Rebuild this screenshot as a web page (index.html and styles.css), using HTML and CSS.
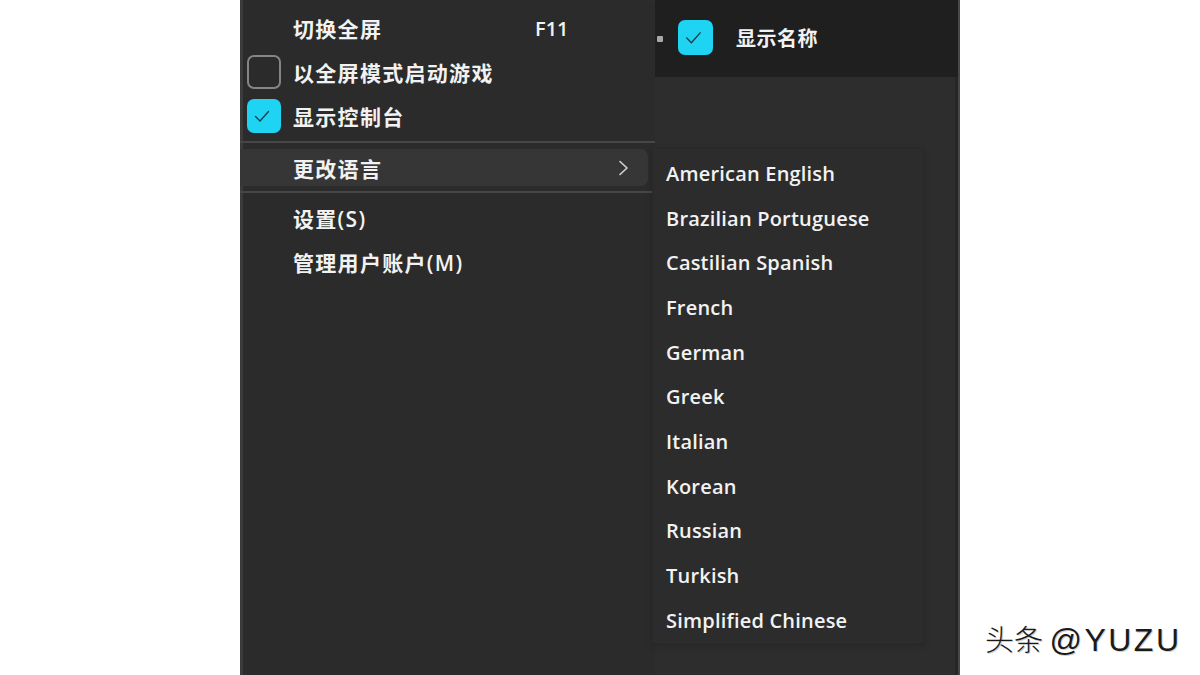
FILE: index.html
```html
<!DOCTYPE html>
<html lang="zh-CN">
<head>
  <meta charset="UTF-8" />
  <title>yuzu - 菜单</title>
  <link rel="stylesheet" href="styles.css">
</head>
<body>
  <div class="gutter"></div>

  <div class="screen">
    <div class="menu">
      <div class="item">
        <span class="box-slot"></span>
        <span class="label">切换全屏</span>
        <span class="shortcut">F11</span>
      </div>
      <div class="item">
        <span class="box-slot"><span class="check"></span></span>
        <span class="label">以全屏模式启动游戏</span>
      </div>
      <div class="item">
        <span class="box-slot">
          <span class="check on">
            <svg width="34" height="34" viewBox="0 0 34 34"><path d="M8.5 17.5 L13 22 L21.5 12.5" fill="none" stroke="#17404c" stroke-width="1.4" stroke-linecap="round" stroke-linejoin="round"/></svg>
          </span>
        </span>
        <span class="label">显示控制台</span>
      </div>
      <div class="sep"></div>
      <div class="item sub active">
        <span class="box-slot"></span>
        <span class="label">更改语言</span>
        <svg class="chevron" width="14" height="16" viewBox="0 0 14 16"><path d="M4 1.5 L11 8 L4 14.5" fill="none" stroke="#d4d4d4" stroke-width="1.6" stroke-linecap="round" stroke-linejoin="round"/></svg>
      </div>
      <div class="sep"></div>
      <div class="item">
        <span class="box-slot"></span>
        <span class="label">设置(S)</span>
      </div>
      <div class="item">
        <span class="box-slot"></span>
        <span class="label">管理用户账户(M)</span>
      </div>
    </div>

    <div class="right">
      <div class="topbar">
        <span class="dot"></span>
        <span class="check on">
          <svg width="35" height="35" viewBox="0 0 34 34"><path d="M8.5 17.5 L13 22 L21.5 12.5" fill="none" stroke="#17404c" stroke-width="1.4" stroke-linecap="round" stroke-linejoin="round"/></svg>
        </span>
        <span class="toplabel">显示名称</span>
      </div>

      <div class="submenu">
        <div class="lang">American English</div>
        <div class="lang">Brazilian Portuguese</div>
        <div class="lang">Castilian Spanish</div>
        <div class="lang">French</div>
        <div class="lang">German</div>
        <div class="lang">Greek</div>
        <div class="lang">Italian</div>
        <div class="lang">Korean</div>
        <div class="lang">Russian</div>
        <div class="lang">Turkish</div>
        <div class="lang">Simplified Chinese</div>
      </div>
    </div>
  </div>

  <div class="side">
    <span class="watermark">头条 <span class="handle">@YUZU</span></span>
  </div>
</body>
</html>
```

FILE: styles.css
```css
body {
  margin: 0;
  height: 675px;
  background: #fff;
  display: flex;
  overflow: hidden;
  font-family: "Open Sans", "Noto Sans CJK SC", sans-serif;
}

.gutter {
  width: 240px;
  flex: none;
}

.screen {
  width: 720px;
  flex: none;
  display: flex;
  background: #2d2d2d;
  box-shadow: inset -2px 0 #474747, inset -5px 0 #262626;
}

/* main context menu */
.menu {
  width: 412px;
  flex: none;
  background: #2b2b2b;
  border-left: 3px solid #3b3b3b;
  border-top-right-radius: 9px;
  padding-top: 6px;
  box-sizing: content-box;
  color: #f2f2f2;
}

.item {
  height: 44px;
  display: flex;
  align-items: center;
  padding-left: 4px;
  font-size: 21px;
  font-weight: 600;
  letter-spacing: 1.3px;
}

.box-slot {
  width: 34px;
  height: 34px;
  flex: none;
  margin-right: 12px;
}

.label {
  width: 242px;
  flex: none;
  white-space: nowrap;
}

.shortcut {
  font-size: 20px;
  letter-spacing: 0;
}

.check {
  display: block;
  width: 34px;
  height: 34px;
  box-sizing: border-box;
  border: 2px solid #858585;
  border-radius: 7px;
  background: #2b2b2b;
}

.check.on {
  border: none;
  background: #1fd3f3;
}

.check svg {
  display: block;
}

.sep {
  height: 2px;
  margin: 3px 0 0 -3px;
  background: #464646;
}

.item.sub {
  height: 37px;
  margin: 6px 7px 5px -3px;
  padding-left: 7px;
}

.item.active {
  background: #363636;
  border-radius: 0 7px 7px 0;
}

.item.sub + .sep {
  margin-top: 0;
  margin-bottom: 3px;
}

.chevron {
  margin-left: 81px;
}

/* right side */
.right {
  flex: 1;
  display: flex;
  flex-direction: column;
}

.topbar {
  height: 77px;
  background: #1f1f1f;
  display: flex;
  align-items: center;
  margin-right: 2px;
}

.dot {
  width: 6px;
  height: 6px;
  border-radius: 1px;
  background: #a8a8a8;
  margin: 0 15px 0 2px;
}

.topbar .check {
  width: 35px;
  height: 35px;
  margin-top: -2px;
}

.toplabel {
  margin-left: 23px;
  color: #f2f2f2;
  font-size: 20px;
  font-weight: 600;
  letter-spacing: 0.5px;
  margin-top: -2px;
}

.submenu {
  width: 270px;
  margin: 71px 0 0 -3px;
  padding-top: 2px;
  background: #2c2c2c;
  border: 1px solid #292929;
  box-shadow: 0 2px 6px rgba(0, 0, 0, 0.15);
}

.lang {
  height: 44.7px;
  display: flex;
  align-items: center;
  padding-left: 13px;
  color: #f2f2f2;
  font-size: 20px;
  font-weight: 600;
  letter-spacing: 0.2px;
}

/* watermark */
.side {
  flex: 1;
  display: flex;
  align-items: flex-end;
  padding: 0 0 16px 25px;
}

.watermark {
  font-family: "Noto Sans CJK SC", sans-serif;
  font-size: 29px;
  font-weight: 300;
  color: #1a1a1a;
  white-space: nowrap;
  text-shadow: 1px 1px 0 #cfcfcf;
}

.handle {
  font-family: "Liberation Sans", sans-serif;
  font-size: 32px;
  letter-spacing: 2.5px;
}
```
